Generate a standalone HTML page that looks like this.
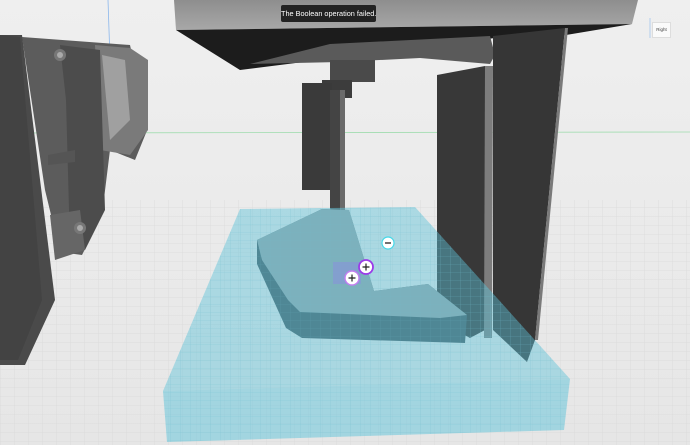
<!DOCTYPE html>
<html><head><meta charset="utf-8"><style>
html,body{margin:0;padding:0;width:690px;height:445px;overflow:hidden;background:#efefef;font-family:"Liberation Sans",sans-serif}
svg{position:absolute;left:0;top:0}
.tip{position:absolute;left:281px;top:5px;width:95px;height:17px;background:#222;color:#fff;font-size:7.3px;line-height:17px;text-align:center;border-radius:2px;white-space:nowrap;overflow:hidden}
.cube{position:absolute;left:652px;top:22px;width:17px;height:14px;background:#fafafa;border:1px solid #ddd;font-size:4.5px;line-height:14px;text-align:center;color:#444}
</style></head><body>
<svg width="690" height="445" viewBox="0 0 690 445">
<defs>
<linearGradient id="bg" x1="0" y1="0" x2="0" y2="1"><stop offset="0" stop-color="#efefef"/><stop offset="1" stop-color="#e6e6e6"/></linearGradient>
<pattern id="grid" width="14" height="9" patternUnits="userSpaceOnUse"><path d="M0 0H14M0 0V9" stroke="#d6d6d6" stroke-width="0.8" fill="none"/></pattern>
<pattern id="bgrid" width="10" height="8" patternUnits="userSpaceOnUse"><path d="M0 0H10M0 0V8" stroke="#6fbfd0" stroke-width="0.6" fill="none" opacity="0.6"/></pattern>
<linearGradient id="slab" x1="0" y1="0" x2="0" y2="1"><stop offset="0" stop-color="#8e8e8e"/><stop offset="1" stop-color="#a8a8a8"/></linearGradient>
</defs>
<rect width="690" height="445" fill="url(#bg)"/>
<rect y="200" width="690" height="245" fill="url(#grid)" opacity="0.8"/>
<line x1="0" y1="133" x2="690" y2="132" stroke="#9fdcae" stroke-width="0.8"/>
<line x1="108" y1="0" x2="110" y2="60" stroke="#8bb7ec" stroke-width="0.8"/>
<!-- left fan device -->
<polygon points="22,37 130,45 148,128 135,160 110,150 102,215 82,255 60,252 45,190" fill="#5c5c5c"/>
<polygon points="95,45 130,48 148,60 148,130 130,155 100,150" fill="#7a7a7a"/>
<polygon points="102,55 125,60 130,120 110,140" fill="#a0a0a0"/>
<polygon points="60,45 100,50 105,210 85,250 70,246 66,100" fill="#4c4c4c"/>
<polygon points="48,155 75,150 75,162 48,165" fill="#555"/>
<polygon points="50,215 80,210 85,250 55,260" fill="#666"/>
<circle cx="60" cy="55" r="6" fill="#777"/><circle cx="60" cy="55" r="3" fill="#aaa"/>
<circle cx="80" cy="228" r="6" fill="#777"/><circle cx="80" cy="228" r="3" fill="#aaa"/>
<polygon points="0,35 22,35 55,300 25,365 0,365" fill="#4a4a4a"/>
<polygon points="0,35 20,37 42,300 18,360 0,360" fill="#434343"/>
<!-- top slab -->
<polygon points="174,0 638,0 632,24 176,30" fill="url(#slab)"/>
<polygon points="176,30 632,24 560,36 495,38 240,70" fill="#1c1c1c"/>
<polygon points="250,64 330,44 490,36 495,55 490,64 420,58 340,62" fill="#5a5a5a"/>
<!-- central column -->
<rect x="330" y="60" width="45" height="22" fill="#4a4a4a"/>
<rect x="322" y="80" width="30" height="18" fill="#3c3c3c"/>
<rect x="302" y="83" width="30" height="107" fill="#3a3a3a"/>
<rect x="330" y="90" width="10" height="125" fill="#444"/>
<rect x="340" y="90" width="5" height="125" fill="#6a6a6a"/>
<!-- right panels -->
<polygon points="437,75 485,66 485,330 470,338 437,320" fill="#383838"/>
<polygon points="485,66 493,66 492,338 484,338" fill="#7d7d7d"/>
<polygon points="493,36 565,28 535,340 527,362 493,330" fill="#363636"/>
<polygon points="565,28 568,28 538,340 535,340" fill="#7a7a7a"/>
<!-- blue box (translucent) -->
<polygon points="240,209 415,207 570,379 163,391" fill="#5ec3da" opacity="0.45"/>
<polygon points="163,391 570,379 564,430 167,442" fill="#5ec3da" opacity="0.5"/>
<polygon points="163,391 570,379 564,430 167,442" fill="url(#bgrid)"/>
<polygon points="240,209 415,207 570,379 163,391" fill="url(#bgrid)"/>
<!-- teal part -->
<polygon points="257,240 322,209 349,210 374,291 428,284 467,315 465,343 302,338 286,328 257,264" fill="#4f8795"/>
<polygon points="257,240 322,209 349,210 374,291 428,284 467,315 440,318 300,312 288,300 262,260" fill="#7cb1bd"/>
<polygon points="257,240 322,209 349,210 374,291 428,284 467,315 465,343 302,338 286,328 257,264" fill="url(#bgrid)" opacity="0.5"/>
<!-- selection -->
<rect x="333" y="262" width="28" height="22" fill="#8a8ee0" opacity="0.5"/>
<circle cx="388" cy="243" r="6" fill="#fff" stroke="#44d8e8" stroke-width="1.2"/><path d="M385 243H391" stroke="#222" stroke-width="1.3"/>
<circle cx="366" cy="267" r="7" fill="#fff" stroke="#9b3be8" stroke-width="1.8"/><path d="M362.5 267H369.5M366 263.5V270.5" stroke="#222" stroke-width="1.2"/>
<circle cx="352" cy="278" r="7" fill="#fff" stroke="#c27ef0" stroke-width="1.4"/><path d="M348.5 278H355.5M352 274.5V281.5" stroke="#222" stroke-width="1.2"/>
<line x1="650" y1="18" x2="650" y2="38" stroke="#8bb7ec" stroke-width="0.6"/>
</svg>
<div class="tip">The Boolean operation failed.</div>
<div class="cube">Right</div>
</body></html>
